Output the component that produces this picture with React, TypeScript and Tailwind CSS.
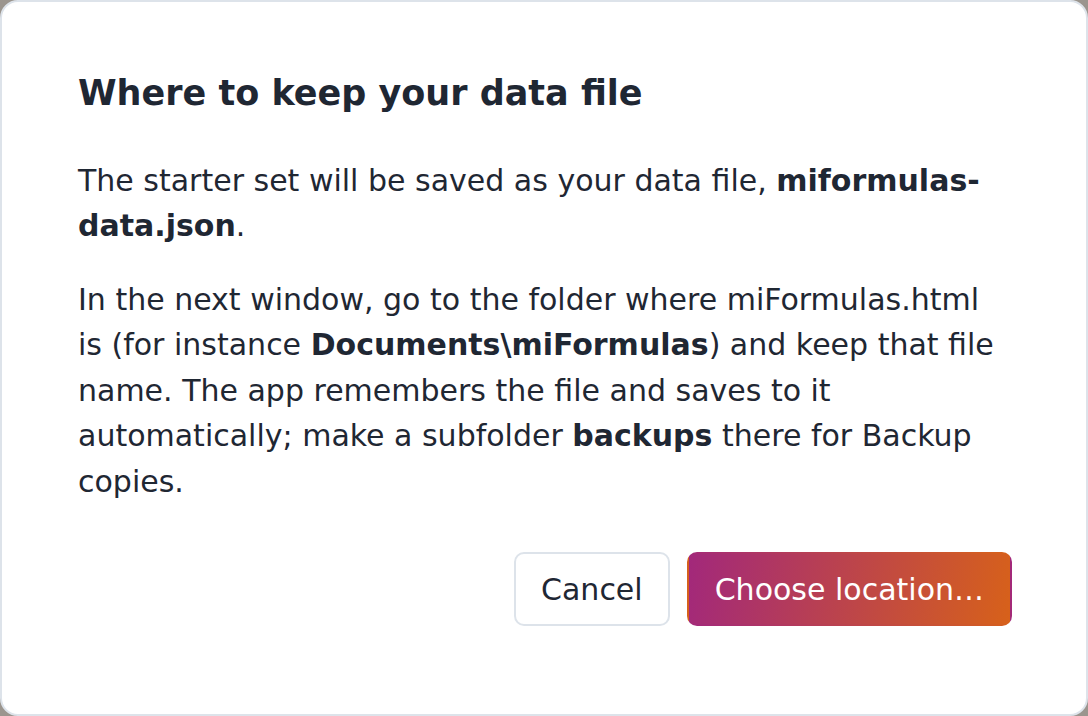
import React from "react";

export default function App() {
  return (
    <div className="w-[1088px] h-[716px] bg-[#9b958e]" style={{ fontFamily: '"DejaVu Sans", sans-serif' }}>
      <div className="w-full h-full bg-white rounded-[18px] border-2 border-[#dde3ea] pl-[76px] pr-[74px] pt-[65px] text-[#1f2733] flex flex-col">
        <h2 className="text-[35px] font-bold leading-[52.5px]">Where to keep your data file</h2>
        <p className="mt-[38px] text-[30px] leading-[45.5px]">
          The starter set will be saved as your data file, <b>miformulas-data.json</b>.
        </p>
        <p className="mt-[28px] text-[30px] leading-[45.5px]">
          In the next window, go to the folder where miFormulas.html is (for instance <b>Documents\miFormulas</b>) and keep that file name. The app remembers the file and saves to it automatically; make a subfolder <b>backups</b> there for Backup copies.
        </p>
        <div className="mt-[48px] flex justify-end gap-[17px]">
          <button className="h-[74px] px-[25px] rounded-[10px] border-2 border-[#dde3ea] bg-white text-[30px] text-[#1f2733]">
            Cancel
          </button>
          <button className="h-[74px] px-[26px] rounded-[10px] border-2 border-transparent bg-linear-[100deg] from-[#a2287b] to-[#d7611a] text-[30px] text-white">
            Choose location…
          </button>
        </div>
      </div>
    </div>
  );
}
